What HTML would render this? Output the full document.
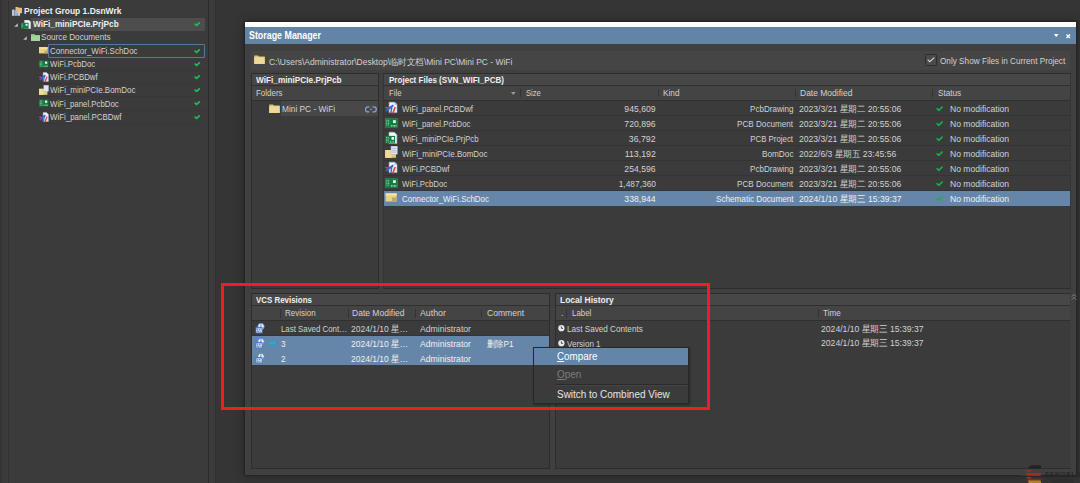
<!DOCTYPE html><html><head><meta charset="utf-8"><style>
html,body{margin:0;padding:0}
body{width:1080px;height:483px;position:relative;overflow:hidden;background:#353535;font-family:"Liberation Sans",sans-serif;}
body div, body svg{position:absolute;}
.t{font-size:9px;line-height:14px;color:#d2d2d2;white-space:nowrap;}
.b{font-size:9px;line-height:14px;color:#f0f0f0;font-weight:bold;white-space:nowrap;}
.m{font-size:10px;line-height:14px;color:#e6e6e6;white-space:nowrap;}
.h{font-size:10.3px;line-height:14px;color:#ffffff;font-weight:bold;white-space:nowrap;}
</style></head><body>
<div style="left:0px;top:0px;width:2px;height:483px;background:#353535;"></div>
<div style="left:2px;top:0px;width:6px;height:483px;background:#3b3b3b;"></div>
<div style="left:8px;top:0px;width:1px;height:483px;background:#313131;"></div>
<div style="left:9px;top:0px;width:199px;height:483px;background:#3b3b3b;"></div>
<div style="left:208px;top:0px;width:1px;height:483px;background:#2c2c2c;"></div>
<div style="left:209px;top:0px;width:6px;height:483px;background:#3c3c3c;"></div>
<div style="left:215px;top:0px;width:1px;height:483px;background:#303030;"></div>
<div style="left:31px;top:18.2px;width:174px;height:12.4px;background:#4d4d4d;"></div>
<div style="left:48px;top:44.2px;width:155px;height:11.6px;border:1px solid #58789a;border-radius:1px;"></div>
<div style="left:38px;top:70.0px;width:167px;height:0.8px;background:#373737;"></div>
<div style="left:38px;top:83.2px;width:167px;height:0.8px;background:#373737;"></div>
<div style="left:38px;top:96.39999999999999px;width:167px;height:0.8px;background:#373737;"></div>
<div style="left:38px;top:109.6px;width:167px;height:0.8px;background:#373737;"></div>
<div style="left:38px;top:122.8px;width:167px;height:0.8px;background:#373737;"></div>
<svg style="left:12px;top:6.5px" width="10" height="9" viewBox="0 0 10 9">
<path d="M3.5 0h2.5l0.6 0.7h3.4v5.5h-6.5z" fill="#e2bf72"/>
<rect x="0" y="2.6" width="2.6" height="6.2" fill="#b8c6dc"/>
<rect x="2.8" y="3.4" width="2.6" height="5.4" fill="#a6b6d0"/>
<rect x="5.6" y="4.6" width="2.4" height="4.2" fill="#c2cee2"/>
</svg>
<div class="b" style="left:23.95px;top:4px;transform:scaleX(0.9378);transform-origin:0 0;">Project Group 1.DsnWrk</div>
<svg style="left:14px;top:23.4px" width="4" height="4" viewBox="0 0 4 4"><path d="M3.8 0.2V3.8H0.2z" fill="#bdbdbd"/></svg>
<svg style="left:21px;top:19.8px" width="10" height="9" viewBox="0 0 10 9">
<path d="M3.4 0h4.4l2 2v6.8h-6.4z" fill="#eef2f8" stroke="#a8b2c2" stroke-width="0.5"/>
<rect x="0" y="2.8" width="7.6" height="6" fill="#177c44"/>
<rect x="4.6" y="3.8" width="2" height="2" fill="#e4f4ea"/>
<path d="M1.2 3.6v4.4" stroke="#9fd8b4" stroke-width="0.8" stroke-dasharray="0.9 0.5"/>
</svg>
<div class="b" style="left:32.55px;top:17px;transform:scaleX(0.9170);transform-origin:0 0;">WiFi_miniPCIe.PrjPcb</div>
<svg style="left:194.4px;top:22.3px" width="6" height="5" viewBox="0 0 6 5">
<path d="M1.2 2.1 L2.6 3.4 L5.3 0.9" fill="none" stroke="#1cc058" stroke-width="1.7" stroke-linecap="round" stroke-linejoin="round"/>
</svg>
<svg style="left:23px;top:35.8px" width="4" height="4" viewBox="0 0 4 4"><path d="M3.8 0.2V3.8H0.2z" fill="#bdbdbd"/></svg>
<svg style="left:30.6px;top:33.6px" width="9" height="7" viewBox="0 0 9 7">
<path d="M0 0h3.5l0.8 0.9h4.7v6.1h-9z" fill="#86c080"/>
<rect x="0" y="1.6" width="9" height="5.4" fill="#a3d69c"/>
</svg>
<div class="t" style="left:41.45px;top:30px;transform:scaleX(0.9092);transform-origin:0 0;">Source Documents</div>
<svg style="left:39px;top:47.1px" width="10" height="7" viewBox="0 0 10 7">
<rect x="0" y="0.2" width="8.7" height="6.2" fill="#ead283"/>
<rect x="0" y="0.2" width="8.7" height="1.5" fill="#f5e6aa"/>
<rect x="5.5" y="3.6" width="3.2" height="2.8" fill="#bba86c"/>
</svg>
<div class="t" style="left:50.35px;top:44px;transform:scaleX(0.8889);transform-origin:0 0;">Connector_WiFi.SchDoc</div>
<svg style="left:194.4px;top:48.5px" width="6" height="5" viewBox="0 0 6 5">
<path d="M1.2 2.1 L2.6 3.4 L5.3 0.9" fill="none" stroke="#1cc058" stroke-width="1.7" stroke-linecap="round" stroke-linejoin="round"/>
</svg>
<svg style="left:39px;top:59.7px" width="10" height="8" viewBox="0 0 10 8">
<rect x="0" y="0.6" width="9.5" height="6.8" fill="#177c44"/>
<path d="M1.3 1.4v5.2M2.8 1.4v5.2" stroke="#9fd8b4" stroke-width="0.8" stroke-dasharray="0.9 0.5"/>
<rect x="6" y="1.6" width="2.2" height="2.2" fill="#e4f4ea"/>
<path d="M4.6 6.2h4.2" stroke="#bfe6cc" stroke-width="0.9" stroke-dasharray="0.8 0.4"/>
</svg>
<div class="t" style="left:50.35px;top:57px;transform:scaleX(0.8709);transform-origin:0 0;">WiFi.PcbDoc</div>
<svg style="left:194.4px;top:61.800000000000004px" width="6" height="5" viewBox="0 0 6 5">
<path d="M1.2 2.1 L2.6 3.4 L5.3 0.9" fill="none" stroke="#1cc058" stroke-width="1.7" stroke-linecap="round" stroke-linejoin="round"/>
</svg>
<svg style="left:38.5px;top:71.9px" width="10" height="10" viewBox="0 0 13 13">
<path d="M5.4 0.8h4.4l2.4 2.4v9h-6.8z" fill="#eef3fb" stroke="#aab4c8" stroke-width="0.7"/>
<path d="M0.3 6.4 L5.6 7.8" stroke="#e0404a" stroke-width="1.6"/>
<path d="M0.9 10.4 Q4.2 7 8.4 4.2" fill="none" stroke="#3262d4" stroke-width="2.1"/>
<path d="M6.9 5.6 L5.9 12.4" stroke="#3a66d0" stroke-width="1.6"/>
<path d="M10.4 6 L8 12.6" stroke="#e0404a" stroke-width="1.8"/>
</svg>
<div class="t" style="left:50.35px;top:70px;transform:scaleX(0.8752);transform-origin:0 0;">WiFi.PCBDwf</div>
<svg style="left:194.4px;top:75.0px" width="6" height="5" viewBox="0 0 6 5">
<path d="M1.2 2.1 L2.6 3.4 L5.3 0.9" fill="none" stroke="#1cc058" stroke-width="1.7" stroke-linecap="round" stroke-linejoin="round"/>
</svg>
<svg style="left:38.5px;top:85.1px" width="10" height="10" viewBox="0 0 10 10">
<rect x="0" y="3.8" width="8.4" height="6" fill="#e6cf7e"/>
<rect x="0" y="3.8" width="4.6" height="6" fill="#f0dc98"/>
<rect x="4.8" y="0.2" width="4.8" height="6.2" fill="#dfe6f0" stroke="#a8b2c2" stroke-width="0.4"/>
</svg>
<div class="t" style="left:50.35px;top:83px;transform:scaleX(0.8847);transform-origin:0 0;">WiFi_miniPCIe.BomDoc</div>
<svg style="left:194.4px;top:88.19999999999999px" width="6" height="5" viewBox="0 0 6 5">
<path d="M1.2 2.1 L2.6 3.4 L5.3 0.9" fill="none" stroke="#1cc058" stroke-width="1.7" stroke-linecap="round" stroke-linejoin="round"/>
</svg>
<svg style="left:39px;top:99.3px" width="10" height="8" viewBox="0 0 10 8">
<rect x="0" y="0.6" width="9.5" height="6.8" fill="#177c44"/>
<path d="M1.3 1.4v5.2M2.8 1.4v5.2" stroke="#9fd8b4" stroke-width="0.8" stroke-dasharray="0.9 0.5"/>
<rect x="6" y="1.6" width="2.2" height="2.2" fill="#e4f4ea"/>
<path d="M4.6 6.2h4.2" stroke="#bfe6cc" stroke-width="0.9" stroke-dasharray="0.8 0.4"/>
</svg>
<div class="t" style="left:50.35px;top:97px;transform:scaleX(0.8693);transform-origin:0 0;">WiFi_panel.PcbDoc</div>
<svg style="left:194.4px;top:101.39999999999999px" width="6" height="5" viewBox="0 0 6 5">
<path d="M1.2 2.1 L2.6 3.4 L5.3 0.9" fill="none" stroke="#1cc058" stroke-width="1.7" stroke-linecap="round" stroke-linejoin="round"/>
</svg>
<svg style="left:38.5px;top:111.5px" width="10" height="10" viewBox="0 0 13 13">
<path d="M5.4 0.8h4.4l2.4 2.4v9h-6.8z" fill="#eef3fb" stroke="#aab4c8" stroke-width="0.7"/>
<path d="M0.3 6.4 L5.6 7.8" stroke="#e0404a" stroke-width="1.6"/>
<path d="M0.9 10.4 Q4.2 7 8.4 4.2" fill="none" stroke="#3262d4" stroke-width="2.1"/>
<path d="M6.9 5.6 L5.9 12.4" stroke="#3a66d0" stroke-width="1.6"/>
<path d="M10.4 6 L8 12.6" stroke="#e0404a" stroke-width="1.8"/>
</svg>
<div class="t" style="left:50.35px;top:110px;transform:scaleX(0.8757);transform-origin:0 0;">WiFi_panel.PCBDwf</div>
<svg style="left:194.4px;top:114.6px" width="6" height="5" viewBox="0 0 6 5">
<path d="M1.2 2.1 L2.6 3.4 L5.3 0.9" fill="none" stroke="#1cc058" stroke-width="1.7" stroke-linecap="round" stroke-linejoin="round"/>
</svg>
<div style="left:245px;top:22px;width:831px;height:453px;box-shadow:0 0 2px 1px rgba(0,0,0,0.28), 0 0 10px 2px rgba(0,0,0,0.2);"></div>
<div style="left:245px;top:22px;width:831px;height:453px;background:#404040;"></div>
<div style="left:245px;top:22px;width:831px;height:5px;background:#ffffff;"></div>
<div style="left:245px;top:27px;width:831px;height:17px;background:#6284a6;"></div>
<div class="h" style="left:248.65px;top:29px;transform:scaleX(0.8618);transform-origin:0 0;">Storage Manager</div>
<svg style="left:1054px;top:34px" width="5" height="4" viewBox="0 0 5 4"><path d="M0 0H4.4L2.2 3.3z" fill="#ffffff"/></svg>
<svg style="left:1066px;top:33.8px" width="5" height="5" viewBox="0 0 5 5"><path d="M0.5 0.5L4 4M4 0.5L0.5 4" stroke="#ffffff" stroke-width="1.3"/></svg>
<div style="left:251px;top:51px;width:819px;height:18.5px;background:#454545;"></div>
<svg style="left:254.3px;top:55.4px" width="11" height="9" viewBox="0 0 11 9">
<path d="M0.2 0.6h3.9l0.9 1h5.7v7.4h-10.5z" fill="#d9bf7a"/>
<rect x="0.2" y="2.2" width="10.5" height="6.7" fill="#eed89a"/>
</svg>
<div class="t" style="left:268.75px;top:55px;transform:scaleX(0.9414);transform-origin:0 0;">C:\Users\Administrator\Desktop\临时文档\Mini PC\Mini PC - WiFi</div>
<div style="left:924.6px;top:54.3px;width:10px;height:9.6px;border:1px solid #2c2c2c;background:#4a4a4a;border-radius:1.5px;"></div>
<svg style="left:926.6px;top:57px" width="8" height="6" viewBox="0 0 8 6"><path d="M0.7 2.6 L2.8 4.7 L7.2 0.6" fill="none" stroke="#d6d6d6" stroke-width="1.1"/></svg>
<div class="t" style="left:939.55px;top:54px;transform:scaleX(0.9101);transform-origin:0 0;">Only Show Files in Current Project</div>
<div style="left:251px;top:73px;width:126px;height:214px;border:1px solid #2d2d2d;background:#3b3b3b;"></div>
<div style="left:252px;top:74px;width:126px;height:11px;background:#474747;"></div>
<div style="left:252px;top:85px;width:126px;height:1px;background:#303030;"></div>
<div style="left:252px;top:86px;width:126px;height:14px;background:#444444;"></div>
<div style="left:252px;top:100px;width:126px;height:1px;background:#303030;"></div>
<div class="b" style="left:256.45px;top:73px;transform:scaleX(0.9160);transform-origin:0 0;">WiFi_miniPCIe.PrjPcb</div>
<div class="t" style="left:256.45px;top:86px;transform:scaleX(0.8862);transform-origin:0 0;">Folders</div>
<div style="left:281px;top:101px;width:97px;height:15px;background:#484848;"></div>
<svg style="left:269px;top:103.6px" width="11" height="9" viewBox="0 0 11 9">
<path d="M0.2 0.6h3.9l0.9 1h5.7v7.4h-10.5z" fill="#d9bf7a"/>
<rect x="0.2" y="2.2" width="10.5" height="6.7" fill="#eed89a"/>
</svg>
<div class="t" style="left:281.75px;top:102px;transform:scaleX(0.9235);transform-origin:0 0;">Mini PC - WiFi</div>
<svg style="left:364.6px;top:105.5px" width="12" height="7" viewBox="0 0 12 7"><path d="M4.4 0.9H3a2.5 2.5 0 0 0 0 5h1.4M7.4 0.9h1.4a2.5 2.5 0 0 1 0 5H7.4" fill="none" stroke="#86a4d0" stroke-width="1.3"/><path d="M5.2 3.4h1.6" stroke="#86a4d0" stroke-width="1.1"/></svg>
<div style="left:383px;top:73px;width:686px;height:214px;border:1px solid #2d2d2d;background:#3b3b3b;border-left-color:#343434;border-right-color:#363636;"></div>
<div style="left:384px;top:74px;width:686px;height:11px;background:#474747;"></div>
<div style="left:384px;top:85px;width:686px;height:1px;background:#303030;"></div>
<div style="left:384px;top:86px;width:686px;height:14px;background:#444444;"></div>
<div style="left:384px;top:100px;width:686px;height:1px;background:#303030;"></div>
<div class="b" style="left:388.95px;top:73px;transform:scaleX(0.8947);transform-origin:0 0;">Project Files (SVN_WIFI_PCB)</div>
<div class="t" style="left:388.95px;top:86px;transform:scaleX(0.8611);transform-origin:0 0;">File</div>
<svg style="left:510.5px;top:92.2px" width="5" height="3" viewBox="0 0 5 3"><path d="M0 0H4.6L2.3 2.9z" fill="#9a9a9a"/></svg>
<div style="left:520.3px;top:88.6px;width:1px;height:8.6px;background:#333333;"></div>
<div style="left:658.2px;top:88.6px;width:1px;height:8.6px;background:#333333;"></div>
<div style="left:795.3px;top:88.6px;width:1px;height:8.6px;background:#333333;"></div>
<div style="left:932.3px;top:88.6px;width:1px;height:8.6px;background:#333333;"></div>
<div class="t" style="left:525.55px;top:86px;transform:scaleX(0.8450);transform-origin:0 0;">Size</div>
<div class="t" style="left:663.35px;top:86px;transform:scaleX(0.9159);transform-origin:0 0;">Kind</div>
<div class="t" style="left:800.45px;top:86px;transform:scaleX(0.9436);transform-origin:0 0;">Date Modified</div>
<div class="t" style="left:937.75px;top:86px;transform:scaleX(0.9092);transform-origin:0 0;">Status</div>
<div style="left:384px;top:115.4px;width:686px;height:0.8px;background:#343434;"></div>
<svg style="left:385px;top:101.1px" width="13" height="13" viewBox="0 0 13 13">
<path d="M4.1 1.2h5.6l2.3 2.3v8.1h-7.9z" fill="#eef3fb" stroke="#aab4c8" stroke-width="0.6"/>
<path d="M9.7 1.2v2.3h2.3" fill="#c8d2e2" stroke="#aab4c8" stroke-width="0.5"/>
<path d="M0.3 6.4 L5.6 7.8" stroke="#e0404a" stroke-width="1.4"/>
<path d="M0.9 10 Q4.2 6.8 8.4 4.2" fill="none" stroke="#3262d4" stroke-width="1.9"/>
<path d="M6.9 5.6 L5.9 12.2" stroke="#3a66d0" stroke-width="1.4"/>
<path d="M10.2 6 L7.8 12.4" stroke="#e0404a" stroke-width="1.6"/>
</svg>
<div class="t" style="left:402.35px;top:102px;transform:scaleX(0.8708);transform-origin:0 0;">WiFi_panel.PCBDwf</div>
<div class="t" style="right:424.40px;top:102px;transform:scaleX(0.9586);transform-origin:100% 0;">945,609</div>
<div class="t" style="right:286.90px;top:102px;transform:scaleX(0.8963);transform-origin:100% 0;">PcbDrawing</div>
<div class="t" style="left:798.65px;top:102px;transform:scaleX(0.9544);transform-origin:0 0;">2023/3/21 星期二 20:55:06</div>
<svg style="left:936.3px;top:105.69999999999999px" width="7" height="6" viewBox="0 0 7 6">
<path d="M1.1 2.7 L2.9 4.3 L6.1 1.1" fill="none" stroke="#18b050" stroke-width="1.6" stroke-linecap="round" stroke-linejoin="round"/>
</svg>
<div class="t" style="left:949.65px;top:102px;transform:scaleX(0.9527);transform-origin:0 0;">No modification</div>
<div style="left:384px;top:130.4px;width:686px;height:0.8px;background:#343434;"></div>
<svg style="left:385px;top:116.1px" width="13" height="13" viewBox="0 0 13 13">
<rect x="0.2" y="2.6" width="12.4" height="8.7" fill="#177c44"/>
<rect x="0.2" y="2.6" width="12.4" height="8.7" fill="none" stroke="#2a9a5a" stroke-width="0.5"/>
<path d="M1.8 3.8v6.4M3.6 3.8v6.4" stroke="#9fd8b4" stroke-width="0.9" stroke-dasharray="1 0.6"/>
<rect x="8" y="4.2" width="2.8" height="2.8" fill="#e4f4ea"/>
<path d="M6 9.8h5.6" stroke="#bfe6cc" stroke-width="1.2" stroke-dasharray="1 0.5"/>
</svg>
<div class="t" style="left:402.35px;top:117px;transform:scaleX(0.8667);transform-origin:0 0;">WiFi_panel.PcbDoc</div>
<div class="t" style="right:424.40px;top:117px;transform:scaleX(0.9586);transform-origin:100% 0;">720,896</div>
<div class="t" style="right:286.90px;top:117px;transform:scaleX(0.9028);transform-origin:100% 0;">PCB Document</div>
<div class="t" style="left:798.65px;top:117px;transform:scaleX(0.9544);transform-origin:0 0;">2023/3/21 星期二 20:55:06</div>
<svg style="left:936.3px;top:120.69999999999999px" width="7" height="6" viewBox="0 0 7 6">
<path d="M1.1 2.7 L2.9 4.3 L6.1 1.1" fill="none" stroke="#18b050" stroke-width="1.6" stroke-linecap="round" stroke-linejoin="round"/>
</svg>
<div class="t" style="left:949.65px;top:117px;transform:scaleX(0.9527);transform-origin:0 0;">No modification</div>
<div style="left:384px;top:145.4px;width:686px;height:0.8px;background:#343434;"></div>
<svg style="left:385px;top:131.1px" width="13" height="13" viewBox="0 0 13 13">
<path d="M4 1.2h5.3l2.6 2.6v8.8h-7.9z" fill="#f2f5fa" stroke="#aab4c4" stroke-width="0.6"/>
<rect x="0.2" y="4.9" width="9.9" height="7.5" fill="#177c44"/>
<path d="M1.6 6v5.5M3.2 6v5.5" stroke="#9fd8b4" stroke-width="0.8" stroke-dasharray="1 0.6"/>
<rect x="6.5" y="6" width="2.5" height="2.8" fill="#e4f4ea"/>
<path d="M5 11h4.5" stroke="#bfe6cc" stroke-width="1" stroke-dasharray="1 0.5"/>
</svg>
<div class="t" style="left:402.35px;top:132px;transform:scaleX(0.8654);transform-origin:0 0;">WiFi_miniPCIe.PrjPcb</div>
<div class="t" style="right:424.40px;top:132px;transform:scaleX(0.9698);transform-origin:100% 0;">36,792</div>
<div class="t" style="right:286.90px;top:132px;transform:scaleX(0.8729);transform-origin:100% 0;">PCB Project</div>
<div class="t" style="left:798.65px;top:132px;transform:scaleX(0.9544);transform-origin:0 0;">2023/3/21 星期二 20:55:06</div>
<svg style="left:936.3px;top:135.7px" width="7" height="6" viewBox="0 0 7 6">
<path d="M1.1 2.7 L2.9 4.3 L6.1 1.1" fill="none" stroke="#18b050" stroke-width="1.6" stroke-linecap="round" stroke-linejoin="round"/>
</svg>
<div class="t" style="left:949.65px;top:132px;transform:scaleX(0.9527);transform-origin:0 0;">No modification</div>
<div style="left:384px;top:160.4px;width:686px;height:0.8px;background:#343434;"></div>
<svg style="left:385px;top:146.1px" width="13" height="13" viewBox="0 0 13 13">
<rect x="0.2" y="4" width="10.8" height="7.8" fill="#e2c878"/>
<rect x="0.2" y="4" width="6.5" height="7.8" fill="#f0da96"/>
<rect x="6" y="0.1" width="6.3" height="8.1" fill="#dfe6f0" stroke="#a8b2c2" stroke-width="0.5"/>
<path d="M7.2 2.5h4M7.2 4.3h4M7.2 6.1h4" stroke="#8c98aa" stroke-width="0.5"/>
</svg>
<div class="t" style="left:402.35px;top:147px;transform:scaleX(0.8857);transform-origin:0 0;">WiFi_miniPCIe.BomDoc</div>
<div class="t" style="right:424.40px;top:147px;transform:scaleX(0.9788);transform-origin:100% 0;">113,192</div>
<div class="t" style="right:286.90px;top:147px;transform:scaleX(0.9155);transform-origin:100% 0;">BomDoc</div>
<div class="t" style="left:798.65px;top:147px;transform:scaleX(0.9522);transform-origin:0 0;">2022/6/3 星期五 23:45:56</div>
<svg style="left:936.3px;top:150.7px" width="7" height="6" viewBox="0 0 7 6">
<path d="M1.1 2.7 L2.9 4.3 L6.1 1.1" fill="none" stroke="#18b050" stroke-width="1.6" stroke-linecap="round" stroke-linejoin="round"/>
</svg>
<div class="t" style="left:949.65px;top:147px;transform:scaleX(0.9527);transform-origin:0 0;">No modification</div>
<div style="left:384px;top:175.4px;width:686px;height:0.8px;background:#343434;"></div>
<svg style="left:385px;top:161.1px" width="13" height="13" viewBox="0 0 13 13">
<path d="M4.1 1.2h5.6l2.3 2.3v8.1h-7.9z" fill="#eef3fb" stroke="#aab4c8" stroke-width="0.6"/>
<path d="M9.7 1.2v2.3h2.3" fill="#c8d2e2" stroke="#aab4c8" stroke-width="0.5"/>
<path d="M0.3 6.4 L5.6 7.8" stroke="#e0404a" stroke-width="1.4"/>
<path d="M0.9 10 Q4.2 6.8 8.4 4.2" fill="none" stroke="#3262d4" stroke-width="1.9"/>
<path d="M6.9 5.6 L5.9 12.2" stroke="#3a66d0" stroke-width="1.4"/>
<path d="M10.2 6 L7.8 12.4" stroke="#e0404a" stroke-width="1.6"/>
</svg>
<div class="t" style="left:402.35px;top:162px;transform:scaleX(0.8716);transform-origin:0 0;">WiFi.PCBDwf</div>
<div class="t" style="right:424.40px;top:162px;transform:scaleX(0.9586);transform-origin:100% 0;">254,596</div>
<div class="t" style="right:286.90px;top:162px;transform:scaleX(0.8963);transform-origin:100% 0;">PcbDrawing</div>
<div class="t" style="left:798.65px;top:162px;transform:scaleX(0.9544);transform-origin:0 0;">2023/3/21 星期二 20:55:06</div>
<svg style="left:936.3px;top:165.7px" width="7" height="6" viewBox="0 0 7 6">
<path d="M1.1 2.7 L2.9 4.3 L6.1 1.1" fill="none" stroke="#18b050" stroke-width="1.6" stroke-linecap="round" stroke-linejoin="round"/>
</svg>
<div class="t" style="left:949.65px;top:162px;transform:scaleX(0.9527);transform-origin:0 0;">No modification</div>
<div style="left:384px;top:190.4px;width:686px;height:0.8px;background:#343434;"></div>
<svg style="left:385px;top:176.1px" width="13" height="13" viewBox="0 0 13 13">
<rect x="0.2" y="2.6" width="12.4" height="8.7" fill="#177c44"/>
<rect x="0.2" y="2.6" width="12.4" height="8.7" fill="none" stroke="#2a9a5a" stroke-width="0.5"/>
<path d="M1.8 3.8v6.4M3.6 3.8v6.4" stroke="#9fd8b4" stroke-width="0.9" stroke-dasharray="1 0.6"/>
<rect x="8" y="4.2" width="2.8" height="2.8" fill="#e4f4ea"/>
<path d="M6 9.8h5.6" stroke="#bfe6cc" stroke-width="1.2" stroke-dasharray="1 0.5"/>
</svg>
<div class="t" style="left:402.35px;top:177px;transform:scaleX(0.8709);transform-origin:0 0;">WiFi.PcbDoc</div>
<div class="t" style="right:424.40px;top:177px;transform:scaleX(0.9339);transform-origin:100% 0;">1,487,360</div>
<div class="t" style="right:286.90px;top:177px;transform:scaleX(0.9028);transform-origin:100% 0;">PCB Document</div>
<div class="t" style="left:798.65px;top:177px;transform:scaleX(0.9544);transform-origin:0 0;">2023/3/21 星期二 20:55:06</div>
<svg style="left:936.3px;top:180.7px" width="7" height="6" viewBox="0 0 7 6">
<path d="M1.1 2.7 L2.9 4.3 L6.1 1.1" fill="none" stroke="#18b050" stroke-width="1.6" stroke-linecap="round" stroke-linejoin="round"/>
</svg>
<div class="t" style="left:949.65px;top:177px;transform:scaleX(0.9527);transform-origin:0 0;">No modification</div>
<div style="left:384px;top:191px;width:686px;height:14.6px;background:#6586a8;"></div>
<svg style="left:385px;top:191.1px" width="13" height="13" viewBox="0 0 13 13">
<rect x="0.6" y="2.4" width="11.1" height="8.1" fill="#ead283"/>
<rect x="0.6" y="2.4" width="11.1" height="2" fill="#f5e6aa"/>
<rect x="7" y="6.5" width="4.7" height="4" fill="#bba86c"/>
</svg>
<div class="t" style="left:402.35px;top:192px;transform:scaleX(0.8828);transform-origin:0 0;color:#f0f0f0;">Connector_WiFi.SchDoc</div>
<div class="t" style="right:424.40px;top:192px;transform:scaleX(0.9586);transform-origin:100% 0;color:#f0f0f0;">338,944</div>
<div class="t" style="right:286.90px;top:192px;transform:scaleX(0.9071);transform-origin:100% 0;color:#f0f0f0;">Schematic Document</div>
<div class="t" style="left:798.65px;top:192px;transform:scaleX(0.9582);transform-origin:0 0;color:#f0f0f0;">2024/1/10 星期三 15:39:37</div>
<svg style="left:936.3px;top:195.7px" width="7" height="6" viewBox="0 0 7 6">
<path d="M1.1 2.7 L2.9 4.3 L6.1 1.1" fill="none" stroke="#18b050" stroke-width="1.6" stroke-linecap="round" stroke-linejoin="round"/>
</svg>
<div class="t" style="left:949.65px;top:192px;transform:scaleX(0.9527);transform-origin:0 0;color:#f0f0f0;">No modification</div>
<svg style="left:1070.5px;top:292.8px" width="6" height="8" viewBox="0 0 6 8"><path d="M0.8 3.6L3 1.4L5.2 3.6M0.8 6.6L3 4.4L5.2 6.6" fill="none" stroke="#8c8c8c" stroke-width="0.9"/></svg>
<div style="left:251px;top:293px;width:297px;height:174px;border:1px solid #2d2d2d;background:#3b3b3b;"></div>
<div style="left:252px;top:294px;width:297px;height:11px;background:#474747;"></div>
<div style="left:252px;top:305px;width:297px;height:1px;background:#303030;"></div>
<div style="left:252px;top:306px;width:297px;height:14px;background:#444444;"></div>
<div style="left:252px;top:320px;width:297px;height:1px;background:#303030;"></div>
<div class="b" style="left:256.35px;top:293px;transform:scaleX(0.8799);transform-origin:0 0;">VCS Revisions</div>
<div style="left:280.2px;top:309px;width:1px;height:8.6px;background:#333333;"></div>
<div style="left:347.5px;top:309px;width:1px;height:8.6px;background:#333333;"></div>
<div style="left:414.6px;top:309px;width:1px;height:8.6px;background:#333333;"></div>
<div style="left:481.4px;top:309px;width:1px;height:8.6px;background:#333333;"></div>
<div class="t" style="left:285.05px;top:306px;transform:scaleX(0.8866);transform-origin:0 0;">Revision</div>
<div class="t" style="left:352.35px;top:306px;transform:scaleX(0.9454);transform-origin:0 0;">Date Modified</div>
<div class="t" style="left:419.65px;top:306px;transform:scaleX(0.9762);transform-origin:0 0;">Author</div>
<div class="t" style="left:486.85px;top:306px;transform:scaleX(0.9509);transform-origin:0 0;">Comment</div>
<div style="left:252px;top:336px;width:297px;height:29.4px;background:#6586a8;"></div>
<div style="left:252px;top:335.2px;width:297px;height:0.8px;background:#343434;"></div>
<svg style="left:255.2px;top:322.6px" width="11" height="11" viewBox="0 0 11 11">
<circle cx="6" cy="3.4" r="3.2" fill="#f2f6fc" stroke="#4a84d4" stroke-width="0.9"/>
<path d="M6 1.1v2.4M6 3.5l-1.1 0.9" stroke="#505050" stroke-width="0.7"/>
<rect x="1" y="4.3" width="6.1" height="5.6" fill="#dce8f8" stroke="#3a78d8" stroke-width="0.8"/>
<rect x="1" y="4.3" width="6.1" height="1.1" fill="#3a78d8"/>
<path d="M2.1 6.7h1M3.9 6.7h1.5M2.1 8.3h1.7M4.5 8.3h1" stroke="#4a4a4a" stroke-width="0.8"/>
</svg>
<div class="t" style="left:280.55px;top:322px;transform:scaleX(0.8736);transform-origin:0 0;">Last Saved Cont…</div>
<div class="t" style="left:350.55px;top:322px;transform:scaleX(0.9431);transform-origin:0 0;">2024/1/10 星…</div>
<div class="t" style="left:419.65px;top:322px;transform:scaleX(0.9620);transform-origin:0 0;">Administrator</div>
<svg style="left:255.2px;top:337.6px" width="11" height="11" viewBox="0 0 11 11">
<circle cx="6" cy="3.4" r="3.2" fill="#f2f6fc" stroke="#4a84d4" stroke-width="0.9"/>
<path d="M6 1.1v2.4M6 3.5l-1.1 0.9" stroke="#505050" stroke-width="0.7"/>
<rect x="1" y="4.3" width="6.1" height="5.6" fill="#dce8f8" stroke="#3a78d8" stroke-width="0.8"/>
<rect x="1" y="4.3" width="6.1" height="1.1" fill="#3a78d8"/>
<path d="M2.1 6.7h1M3.9 6.7h1.5M2.1 8.3h1.7M4.5 8.3h1" stroke="#4a4a4a" stroke-width="0.8"/>
</svg>
<div class="t" style="left:280.55px;top:337px;transform:scaleX(0.9100);transform-origin:0 0;color:#f0f0f0;">3</div>
<div class="t" style="left:350.55px;top:337px;transform:scaleX(0.9431);transform-origin:0 0;color:#f0f0f0;">2024/1/10 星…</div>
<div class="t" style="left:419.65px;top:337px;transform:scaleX(0.9620);transform-origin:0 0;color:#f0f0f0;">Administrator</div>
<div class="t" style="left:486.85px;top:337px;transform:scaleX(0.9133);transform-origin:0 0;color:#f0f0f0;">删除P1</div>
<svg style="left:255.2px;top:352.6px" width="11" height="11" viewBox="0 0 11 11">
<circle cx="6" cy="3.4" r="3.2" fill="#f2f6fc" stroke="#4a84d4" stroke-width="0.9"/>
<path d="M6 1.1v2.4M6 3.5l-1.1 0.9" stroke="#505050" stroke-width="0.7"/>
<rect x="1" y="4.3" width="6.1" height="5.6" fill="#dce8f8" stroke="#3a78d8" stroke-width="0.8"/>
<rect x="1" y="4.3" width="6.1" height="1.1" fill="#3a78d8"/>
<path d="M2.1 6.7h1M3.9 6.7h1.5M2.1 8.3h1.7M4.5 8.3h1" stroke="#4a4a4a" stroke-width="0.8"/>
</svg>
<div class="t" style="left:280.55px;top:352px;transform:scaleX(0.9100);transform-origin:0 0;color:#f0f0f0;">2</div>
<div class="t" style="left:350.55px;top:352px;transform:scaleX(0.9431);transform-origin:0 0;color:#f0f0f0;">2024/1/10 星…</div>
<div class="t" style="left:419.65px;top:352px;transform:scaleX(0.9620);transform-origin:0 0;color:#f0f0f0;">Administrator</div>
<svg style="left:267.6px;top:339.2px" width="10" height="8" viewBox="0 0 10 8"><path d="M0.4 2.1h4.3v-2l4.5 3.8-4.5 3.8v-2h-4.3z" fill="#3aa2cc" stroke="#2f86b0" stroke-width="0.4"/></svg>
<div style="left:555px;top:293px;width:514px;height:174px;border:1px solid #2d2d2d;background:#3b3b3b;border-right-color:#3d3d3d;"></div>
<div style="left:556px;top:294px;width:514px;height:11px;background:#474747;"></div>
<div style="left:556px;top:305px;width:514px;height:1px;background:#303030;"></div>
<div style="left:556px;top:306px;width:514px;height:14px;background:#444444;"></div>
<div style="left:556px;top:320px;width:514px;height:1px;background:#303030;"></div>
<div class="b" style="left:560.15px;top:293px;transform:scaleX(0.9436);transform-origin:0 0;">Local History</div>
<div class="t" style="left:560.55px;top:306px;transform:scaleX(0.9100);transform-origin:0 0;">.</div>
<div style="left:566.4px;top:309px;width:1px;height:8.6px;background:#333333;"></div>
<div style="left:817.6px;top:309px;width:1px;height:8.6px;background:#333333;"></div>
<div class="t" style="left:571.55px;top:306px;transform:scaleX(0.8760);transform-origin:0 0;">Label</div>
<div class="t" style="left:822.95px;top:306px;transform:scaleX(0.9048);transform-origin:0 0;">Time</div>
<svg style="left:558px;top:325.4px" width="7" height="7" viewBox="0 0 7 7">
<circle cx="3.4" cy="3.2" r="3.1" fill="#e8eaee"/>
<path d="M3.4 1.3v2.1h1.6" stroke="#2f2f2f" stroke-width="0.8" fill="none"/>
</svg>
<div class="t" style="left:566.65px;top:322px;transform:scaleX(0.9071);transform-origin:0 0;">Last Saved Contents</div>
<div class="t" style="left:821.15px;top:322px;transform:scaleX(0.9582);transform-origin:0 0;">2024/1/10 星期三 15:39:37</div>
<svg style="left:558px;top:340px" width="7" height="7" viewBox="0 0 7 7">
<circle cx="3.4" cy="3.2" r="3.1" fill="#e8eaee"/>
<path d="M3.4 1.3v2.1h1.6" stroke="#2f2f2f" stroke-width="0.8" fill="none"/>
</svg>
<div class="t" style="left:566.65px;top:337px;transform:scaleX(0.8953);transform-origin:0 0;">Version 1</div>
<div class="t" style="left:821.15px;top:336px;transform:scaleX(0.9582);transform-origin:0 0;">2024/1/10 星期三 15:39:37</div>
<div style="left:221px;top:283px;width:482.6px;height:121px;border:3px solid #ea1f27;"></div>
<div style="left:532.5px;top:346.7px;width:154px;height:55.3px;background:#3b3b3b;border:1px solid #282828;box-shadow:1px 1px 2px rgba(0,0,0,0.35);"></div>
<div style="left:533.5px;top:347.7px;width:154px;height:17.3px;background:#6385a7;"></div>
<div class="m" style="left:556.65px;top:350px;transform:scaleX(0.9820);transform-origin:0 0;color:#ffffff;"><u>C</u>ompare</div>
<div class="m" style="left:556.65px;top:368px;transform:scaleX(0.9931);transform-origin:0 0;color:#7c7c7c;"><u>O</u>pen</div>
<div style="left:556.3px;top:384px;width:131px;height:1px;background:#2a2a2a;"></div>
<div style="left:556.3px;top:385px;width:131px;height:0.6px;background:#454545;"></div>
<div class="m" style="left:556.65px;top:388px;transform:scaleX(0.9947);transform-origin:0 0;">Switch to Combined View</div>
<svg style="left:1015px;top:455px" width="65" height="28" viewBox="0 0 65 28">
<path d="M12.8 13.6 Q14.5 10.2 17 10.2 H26 V13.6z" fill="#232323"/>
<rect x="11.2" y="14.8" width="5" height="1.8" fill="#a82c2c"/>
<rect x="11.2" y="15.6" width="9" height="0.6" fill="#6a3434"/>
<rect x="11.6" y="18" width="14.2" height="2.8" fill="#a82828"/>
<rect x="5" y="20.4" width="8" height="0.5" fill="#7a3030"/>
<rect x="11.4" y="22" width="4.8" height="1.6" fill="#a02c2c"/>
<rect x="15" y="23.6" width="15" height="0.6" fill="#6e3232"/>
<rect x="12.5" y="24.6" width="13" height="1.4" fill="#9a4a2e"/>
<rect x="13.5" y="25.8" width="12.5" height="2.2" fill="#a8862e"/>
<text x="30" y="21.8" font-family="Liberation Sans" font-weight="bold" font-size="6.6" fill="#262626" letter-spacing="0.9" textLength="36" lengthAdjust="spacingAndGlyphs">EEWORLD</text>
<rect x="36" y="24.4" width="22.5" height="3.6" fill="#2e2e2e"/>
</svg>
</body></html>
